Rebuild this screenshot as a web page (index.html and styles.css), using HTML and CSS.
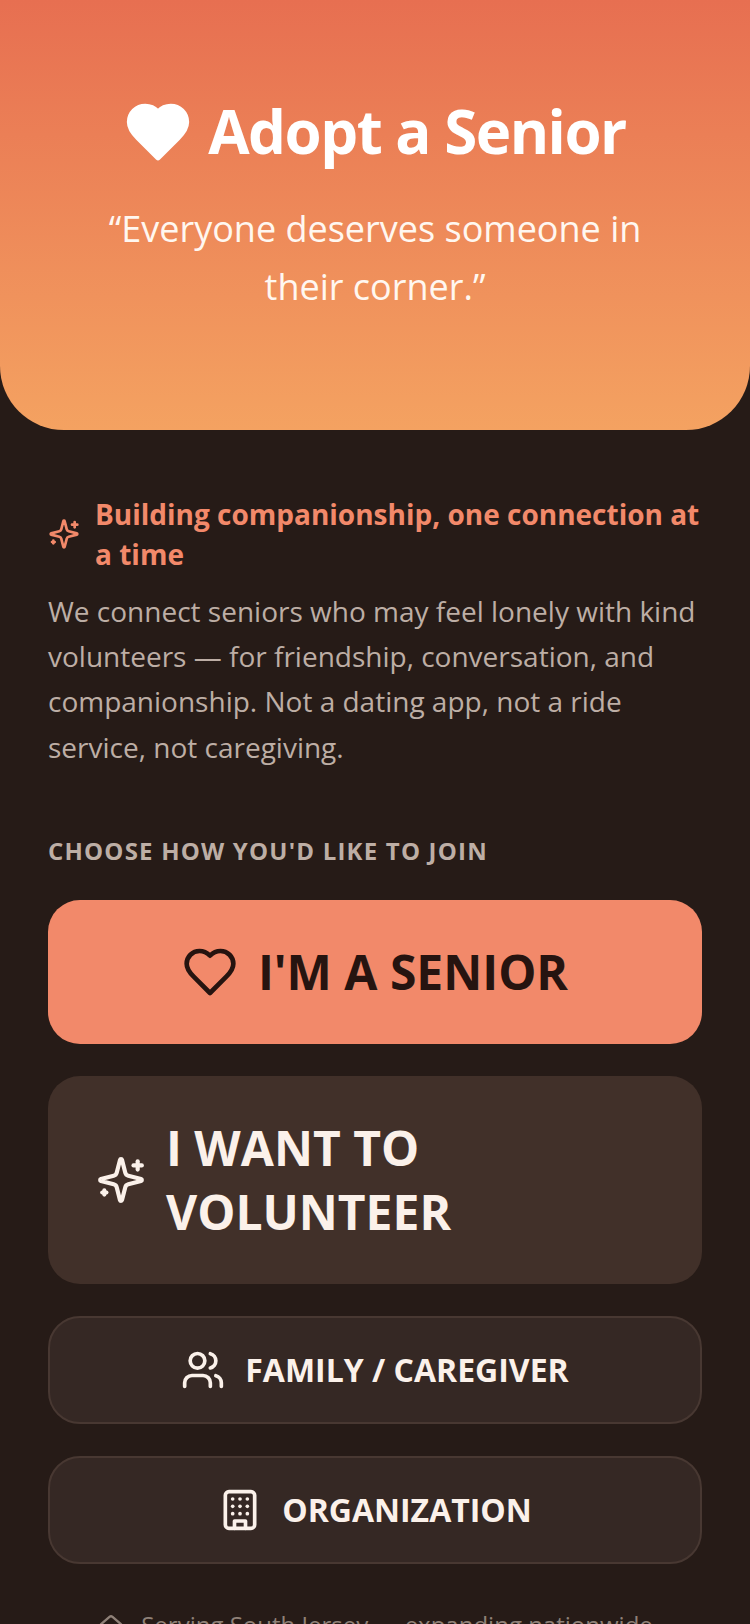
FILE: index.html
```html
<!DOCTYPE html>
<html lang="en">
<head>
<meta charset="utf-8">
<title>Adopt a Senior</title>
<link rel="stylesheet" href="styles.css">
</head>
<body>
<header class="hero">
  <h1 class="hero-title">
    <svg class="hero-heart" viewBox="0 0 24 24" fill="#fff" stroke="#fff" stroke-width="2" stroke-linecap="round" stroke-linejoin="round"><path d="M19 14c1.49-1.46 3-3.21 3-5.5A5.5 5.5 0 0 0 16.5 3c-1.76 0-3 .5-4.5 2-1.5-1.500-2.740-2-4.500-2A5.500 5.500 0 0 0 2 8.500c0 2.300 1.500 4.050 3 5.500l7 7Z"/></svg>
    <span>Adopt a Senior</span>
  </h1>
  <p class="hero-quote">“Everyone deserves someone in their corner.”</p>
</header>
<main class="content">
  <div class="tagline">
    <svg class="tagline-icon" viewBox="0 0 24 24" fill="none" stroke="currentColor" stroke-width="2" stroke-linecap="round" stroke-linejoin="round"><path d="M9.937 15.500A2 2 0 0 0 8.500 14.063l-6.135-1.582a.5.5 0 0 1 0-.962L8.500 9.936A2 2 0 0 0 9.937 8.500l1.582-6.135a.5.5 0 0 1 .963 0L14.063 8.500A2 2 0 0 0 15.500 9.937l6.135 1.581a.5.5 0 0 1 0 .964L15.500 14.063a2 2 0 0 0-1.437 1.437l-1.582 6.135a.5.5 0 0 1-.963 0z"/><path d="M20 3v4"/><path d="M22 5h-4"/><path d="M4 17v2"/><path d="M5 18H3"/></svg>
    <span>Building companionship, one connection at a time</span>
  </div>
  <p class="intro">We connect seniors who may feel lonely with kind volunteers — for friendship, conversation, and companionship. Not a dating app, not a ride service, not caregiving.</p>
  <h2 class="choose">CHOOSE HOW YOU'D LIKE TO JOIN</h2>
  <div class="actions">
    <button class="btn btn-senior">
      <svg class="icon-lg" viewBox="0 0 24 24" fill="none" stroke="currentColor" stroke-width="2" stroke-linecap="round" stroke-linejoin="round"><path d="M19 14c1.49-1.46 3-3.21 3-5.500A5.500 5.500 0 0 0 16.500 3c-1.760 0-3 .5-4.500 2-1.500-1.500-2.740-2-4.500-2A5.500 5.500 0 0 0 2 8.500c0 2.300 1.500 4.050 3 5.500l7 7Z"/></svg>
      <span>I'M A SENIOR</span>
    </button>
    <button class="btn btn-volunteer">
      <svg class="icon-vol" viewBox="0 0 24 24" fill="none" stroke="currentColor" stroke-width="2" stroke-linecap="round" stroke-linejoin="round"><path d="M9.937 15.500A2 2 0 0 0 8.500 14.063l-6.135-1.582a.5.5 0 0 1 0-.962L8.500 9.936A2 2 0 0 0 9.937 8.500l1.582-6.135a.5.5 0 0 1 .963 0L14.063 8.500A2 2 0 0 0 15.500 9.937l6.135 1.581a.5.5 0 0 1 0 .964L15.500 14.063a2 2 0 0 0-1.437 1.437l-1.582 6.135a.5.5 0 0 1-.963 0z"/><path d="M20 3v4"/><path d="M22 5h-4"/><path d="M4 17v2"/><path d="M5 18H3"/></svg>
      <span class="vol-label">I WANT TO VOLUNTEER</span>
    </button>
    <button class="btn btn-outline">
      <svg class="icon-md" viewBox="0 0 24 24" fill="none" stroke="currentColor" stroke-width="2" stroke-linecap="round" stroke-linejoin="round"><path d="M16 21v-2a4 4 0 0 0-4-4H6a4 4 0 0 0-4 4v2"/><circle cx="9" cy="7" r="4"/><path d="M22 21v-2a4 4 0 0 0-3-3.870"/><path d="M16 3.130a4 4 0 0 1 0 7.750"/></svg>
      <span>FAMILY / CAREGIVER</span>
    </button>
    <button class="btn btn-outline">
      <svg class="icon-md" viewBox="0 0 24 24" fill="none" stroke="currentColor" stroke-width="2" stroke-linecap="round" stroke-linejoin="round"><rect x="4" y="2" width="16" height="20" rx="2"/><path d="M9 22v-4h6v4"/><path d="M8 6h.01"/><path d="M16 6h.01"/><path d="M12 6h.01"/><path d="M12 10h.01"/><path d="M12 14h.01"/><path d="M16 10h.01"/><path d="M16 14h.01"/><path d="M8 10h.01"/><path d="M8 14h.01"/></svg>
      <span>ORGANIZATION</span>
    </button>
  </div>
  <p class="footer-note">
    <svg class="icon-sm" viewBox="0 0 24 24" fill="none" stroke="currentColor" stroke-width="2" stroke-linecap="round" stroke-linejoin="round"><path d="M15 21v-8a1 1 0 0 0-1-1h-4a1 1 0 0 0-1 1v8"/><path d="M3 10a2 2 0 0 1 .709-1.528l7-5.999a2 2 0 0 1 2.582 0l7 5.999A2 2 0 0 1 21 10v9a2 2 0 0 1-2 2H5a2 2 0 0 1-2-2z"/></svg>
    <span>Serving South Jersey — expanding nationwide</span>
  </p>
</main>
</body>
</html>
```
FILE: styles.css
```css
* { box-sizing: border-box; }
html, body { margin: 0; padding: 0; }
body {
  background: #261b17;
  font-family: "Open Sans", sans-serif;
  height: 1624px;
  overflow: hidden;
}
.hero {
  height: 430px;
  padding: 94px 48px 0;
  background: linear-gradient(180deg, #e76f51 0%, #f4a261 100%);
  border-radius: 0 0 64px 64px;
  color: #fff;
  text-align: center;
}
.hero-title {
  margin: 0;
  display: flex;
  align-items: center;
  justify-content: center;
  gap: 16px;
  font-size: 60px;
  line-height: 75px;
  font-weight: 700;
  letter-spacing: -1.500px;
}
.hero-heart { width: 68px; height: 68px; flex: none; }
.hero-quote {
  margin: 31px auto 0;
  max-width: 560px;
  font-size: 36px;
  line-height: 57.600px;
  color: #fff7f0;
}
.content { padding: 64px 48px 0; }
.tagline {
  display: flex;
  align-items: center;
  gap: 15px;
  color: #f2896a;
  font-size: 28px;
  line-height: 40px;
  font-weight: 700;
}
.tagline-icon { width: 32px; height: 32px; flex: none; }
.intro {
  margin: 15px 0 0;
  color: #bdaea5;
  font-size: 28px;
  line-height: 45.200px;
}
.choose {
  margin: 65px 0 0;
  color: #bdaea5;
  font-size: 24px;
  line-height: 32px;
  font-weight: 700;
  letter-spacing: 1.200px;
}
.actions {
  margin-top: 33px;
  display: flex;
  flex-direction: column;
  gap: 32px;
}
.btn {
  display: flex;
  align-items: center;
  justify-content: center;
  gap: 20px;
  width: 100%;
  border: 0;
  font-family: inherit;
  font-weight: 700;
}
.btn-senior {
  height: 144px;
  border-radius: 32px;
  background: #f2896a;
  color: #261410;
  font-size: 48px;
}
.btn-volunteer {
  height: 208px;
  padding: 0 48px;
  justify-content: flex-start;
  gap: 20px;
  border-radius: 32px;
  background: #413029;
  color: #fbf1ea;
  font-size: 48px;
  line-height: 64px;
  text-align: left;
}
.vol-label { max-width: 340px; }
.btn-outline {
  height: 108px;
  border-radius: 32px;
  background: #352824;
  border: 2px solid #483832;
  color: #fbf1ea;
  font-size: 32px;
}
.icon-lg { width: 56px; height: 56px; flex: none; }
.icon-vol { width: 50px; height: 50px; flex: none; }
.icon-md { width: 44px; height: 44px; flex: none; }
.footer-note {
  margin: 45px 0 0;
  display: flex;
  align-items: flex-start;
  justify-content: center;
  gap: 16px;
  color: #8f8178;
  font-size: 24px;
  line-height: 32px;
}
.icon-sm { width: 28px; height: 28px; margin-top: 5px; flex: none; }
```
